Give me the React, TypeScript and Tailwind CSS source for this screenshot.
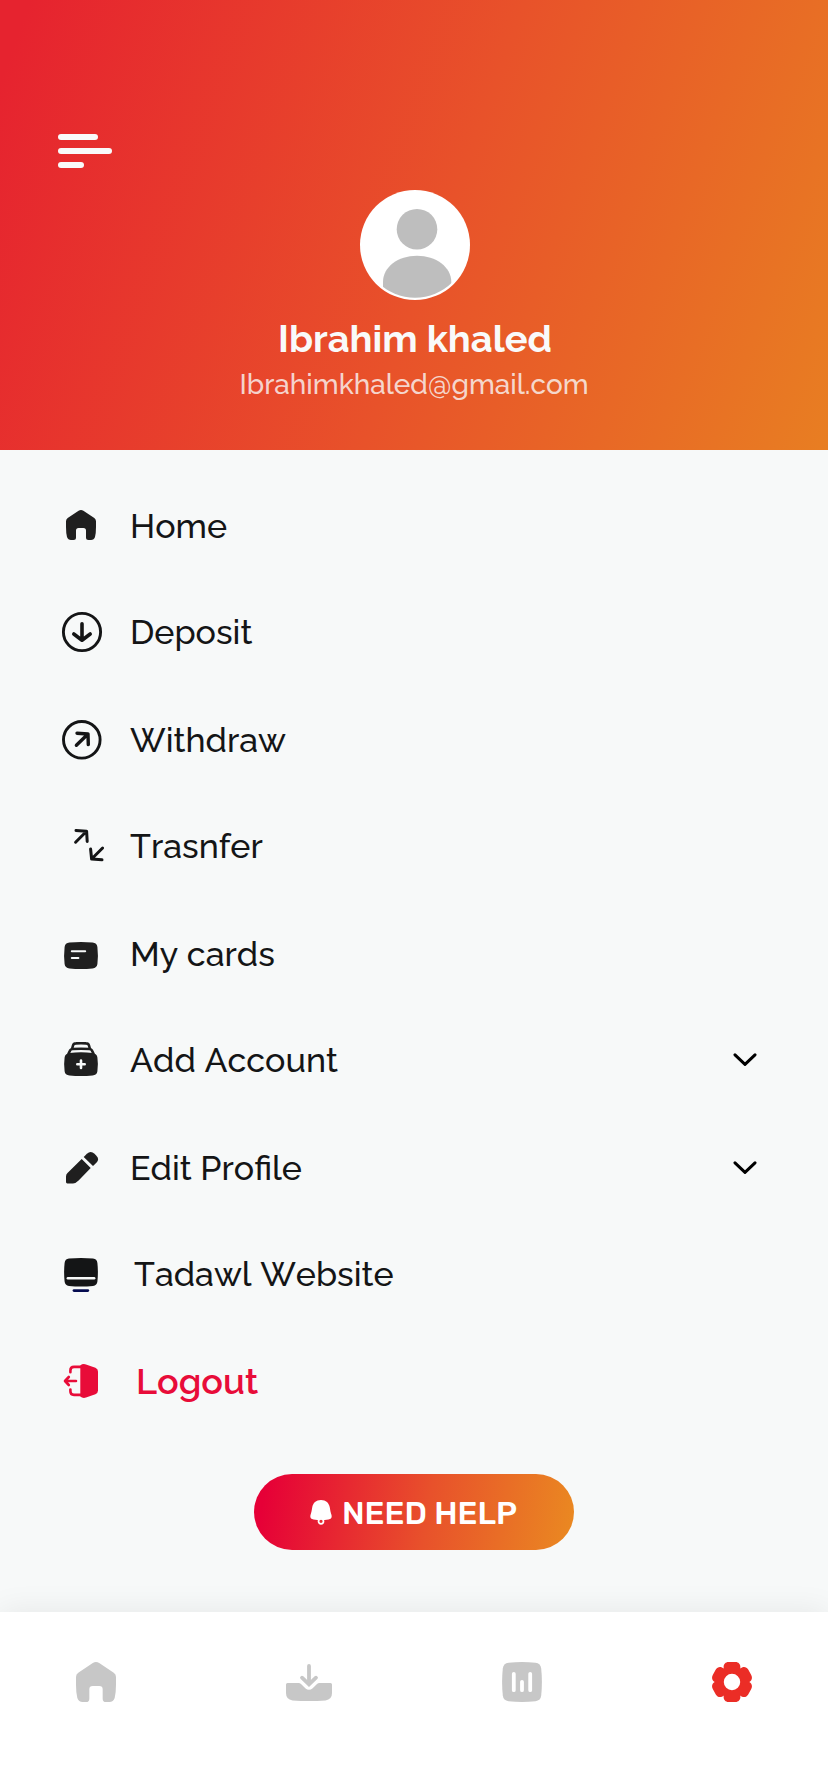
import React from 'react';

interface MenuItem {
  label: string;
  icon: React.ReactNode;
  textClass: string;
  expandable?: boolean;
}

const HOME_PATH =
  'M20.6 8.8Q23 7.2 25.4 8.8L36.3 16Q38 17.2 38 19.2V25Q38 31 37 35Q36 38 33 38H30.5Q28 38 28 35.5V28.5Q28 26 25.5 26H20.5Q18 26 18 28.5V35.5Q18 38 15.5 38H13Q10 38 9 35Q8 31 8 25V19.2Q8 17.2 9.7 16Z';

const IconBox: React.FC<{ children: React.ReactNode }> = ({ children }) => (
  <svg
    className="h-12 w-12 shrink-0"
    viewBox="0 0 48 48"
    fill="none"
    strokeLinecap="round"
    strokeLinejoin="round"
  >
    {children}
  </svg>
);

const HomeIcon = () => (
  <IconBox>
    <path d={HOME_PATH} fill="#1f1f1f" />
  </IconBox>
);

const DepositIcon = () => (
  <IconBox>
    <circle cx="24" cy="24" r="18.6" stroke="#141516" strokeWidth="2.9" />
    <path d="M24 15.8V32M15.8 26L24 32.2L32.2 26" stroke="#141516" strokeWidth="3.6" />
  </IconBox>
);

const WithdrawIcon = () => (
  <IconBox>
    <circle cx="23.8" cy="23.8" r="18.3" stroke="#141516" strokeWidth="2.9" />
    <path d="M18.4 29.2L30 18M19 17.2L30 18L30.3 28.6" stroke="#141516" strokeWidth="3.4" />
  </IconBox>
);

const TransferIcon = () => (
  <IconBox>
    <path
      d="M17.6 20.2L28.6 9.3M18 8.4L28.6 9.2L29.2 19.4M44.6 26L33.6 37M32.6 27L33.6 37L44 37.8"
      stroke="#141516"
      strokeWidth="3"
    />
  </IconBox>
);

const CardIcon = () => (
  <IconBox>
    <path
      d="M11.5 12.6Q23 11.4 34.5 12.6Q39 13 39.4 17Q40.4 25.5 39.4 34Q39 38 34.5 38.4Q23 39.6 11.5 38.4Q7 38 6.6 34Q5.6 25.5 6.6 17Q7 13 11.5 12.6Z"
      fill="#1f1f1f"
    />
    <path d="M13.8 21.3H27.2M13.8 28H20.4" stroke="#f7f9f9" strokeWidth="2" />
  </IconBox>
);

const AddAccountIcon = () => (
  <IconBox>
    <path d="M14.2 12.5L15 9.5Q15.6 7.5 18 7.4Q23 7 28 7.4Q30.4 7.5 31 9.5L31.8 12.5" stroke="#1f1f1f" strokeWidth="2.6" />
    <path d="M10.6 17.5L12 14.6Q12.6 13.2 14.6 13Q23 12.4 31.4 13Q33.4 13.2 34 14.6L35.4 17.5" stroke="#1f1f1f" strokeWidth="2.6" />
    <path
      d="M11.5 16.9Q23 15.8 34.5 16.9Q39 17.4 39.4 21.4Q40.4 28.3 39.4 35.2Q39 39 34.5 39.5Q23 40.6 11.5 39.5Q7 39 6.6 35.2Q5.6 28.3 6.6 21.4Q7 17.4 11.5 16.9Z"
      fill="#1f1f1f"
    />
    <path d="M23 24.6V32M19.3 28.3H26.7" stroke="#f7f9f9" strokeWidth="2.6" />
  </IconBox>
);

const EditIcon = () => (
  <IconBox>
    <path d="M23.7 15L32.7 24L20.6 36.6Q18 39.4 15 39.4H9.3Q8 39.4 8 38V32.5Q8 30.4 9.5 29Z" fill="#1f1f1f" />
    <path d="M25.7 13L28.9 9.8Q32.7 6.4 36.5 9.8L38.4 11.7Q41.8 15.3 38.4 18.8L35 22Z" fill="#1f1f1f" />
  </IconBox>
);

const WebsiteIcon = () => (
  <IconBox>
    <path
      d="M11 8.6Q23 7.4 35 8.6Q39 9 39.4 13Q40.4 22 39.4 31.5Q39 35.4 35 35.9Q23 37.1 11 35.9Q7 35.4 6.6 31.5Q5.6 22 6.6 13Q7 9 11 8.6Z"
      fill="#141516"
    />
    <path d="M9.8 28.3H36.2" stroke="#f7f9f9" strokeWidth="2.4" />
    <path d="M16 40.6H29.8" stroke="#050c50" strokeWidth="2.8" />
  </IconBox>
);

const LogoutIcon = () => (
  <IconBox>
    <path
      d="M22.3 7.5Q24.5 5.5 28 6.4L37.4 9.8Q40 10.9 40 13.5V32.5Q40 35.1 37.4 36.2L28 39.6Q24.5 40.5 22.3 38.5Z"
      fill="#e80c39"
    />
    <path
      d="M12.4 14.2V12.5Q12.4 8.9 16 8.9H23M12.4 31.6V33.3Q12.4 36.9 16 36.9H23"
      stroke="#e80c39"
      strokeWidth="2.6"
    />
    <path d="M18 23H7.2M10.8 19L7 23L10.8 27" stroke="#e80c39" strokeWidth="2.6" />
  </IconBox>
);

const ChevronIcon = () => (
  <svg className="h-6 w-6" viewBox="0 0 24 24" fill="none">
    <path
      d="M2 6.8L12 16.4L22 6.8"
      stroke="#000000"
      strokeWidth="3"
      strokeLinecap="round"
      strokeLinejoin="round"
    />
  </svg>
);

const BellIcon = () => (
  <svg className="h-[25px] w-[22px]" viewBox="0 0 22 25">
    <path
      d="M11 0C16 0 19 3 19.8 7.4C20.2 10 20.6 12 21.5 15C22.1 17.6 21.3 19 18.5 19.4Q11 20.6 3.5 19.4C.7 19 -.1 17.6 .5 15C1.4 12 1.8 10 2.2 7.4C3 3 6 0 11 0Z"
      fill="#ffffff"
    />
    <circle cx="11" cy="21.3" r="2.5" fill="#e72a33" stroke="#ffffff" strokeWidth="1.7" />
  </svg>
);

const menuItems: MenuItem[] = [
  { label: 'Home', icon: <HomeIcon />, textClass: 'ml-6' },
  { label: 'Deposit', icon: <DepositIcon />, textClass: 'ml-6' },
  { label: 'Withdraw', icon: <WithdrawIcon />, textClass: 'ml-6' },
  { label: 'Trasnfer', icon: <TransferIcon />, textClass: 'ml-6' },
  { label: 'My cards', icon: <CardIcon />, textClass: 'ml-6' },
  { label: 'Add Account', icon: <AddAccountIcon />, textClass: 'ml-6', expandable: true },
  { label: 'Edit Profile', icon: <EditIcon />, textClass: 'ml-6', expandable: true },
  { label: 'Tadawl Website', icon: <WebsiteIcon />, textClass: 'ml-7' },
  { label: 'Logout', icon: <LogoutIcon />, textClass: 'ml-[30px] pb-0.5 text-[36px] font-semibold text-[#e80c39]' },
];

const Header: React.FC = () => (
  <header className="flex h-[450px] flex-col items-center bg-[linear-gradient(110deg,#e6232f_3%,#e8522a_53%,#e87e22_100%)] pt-[134px]">
    <button className="flex flex-col gap-2 self-start pl-[58px]" aria-label="Menu">
      <span className="h-1.5 w-10 rounded-full bg-[#f9fafa]" />
      <span className="h-1.5 w-[54px] rounded-full bg-[#f9fafa]" />
      <span className="h-1.5 w-[26px] rounded-full bg-[#f9fafa]" />
    </button>

    <svg className="mt-[22px] ml-0.5 h-[110px] w-[110px] shrink-0" viewBox="0 0 110 110">
      <clipPath id="avatar">
        <circle cx="55" cy="55" r="52.8" />
      </clipPath>
      <circle cx="55" cy="55" r="55" fill="#ffffff" />
      <circle cx="57" cy="39.2" r="20.3" fill="#bebebe" />
      <path d="M23 110V92C23 77 38 65.7 57 65.7S91.3 77 91.3 92V110Z" fill="#bebebe" clipPath="url(#avatar)" />
    </svg>

    <h1 className="mt-[17px] ml-0.5 text-[38px] leading-[44px] font-bold whitespace-nowrap text-[#f9fafa]">
      Ibrahim khaled
    </h1>
    <p className="mt-1.5 text-[28px] leading-9 font-medium whitespace-nowrap text-[#f9fafa]/80">
      Ibrahimkhaled@gmail.com
    </p>
  </header>
);

const BottomNav: React.FC = () => (
  <nav className="flex h-[180px] items-start justify-between bg-white px-[76px] pt-[50px] shadow-[0_0_30px_rgba(0,0,0,0.08)]">
    <svg className="h-10 w-10" viewBox="8 8 30 30">
      <path d={HOME_PATH} fill="#c7c7c7" />
    </svg>
    <svg className="h-10 w-[46px]" viewBox="0 0 46 40" fill="none">
      <path
        d="M1.5 21H12.5Q14 21 15 22L19.3 26.2Q23 29.4 26.7 26.2L31 22Q32 21 33.5 21H44.5Q46 21 46 22.5V31Q46 37.5 39.5 38.4Q23 39.8 6.5 38.4Q0 37.5 0 31V22.5Q0 21 1.5 21Z"
        fill="#c7c7c7"
      />
      <path d="M23 4V22M16 15.7L23 22.4L30 15.7" stroke="#c7c7c7" strokeWidth="3.8" strokeLinecap="round" />
    </svg>
    <svg className="h-10 w-10" viewBox="0 0 40 40" fill="none">
      <path
        d="M6.5 .8Q20 -.6 33.5 .8Q38.6 1.4 39.2 6.5Q40.6 20 39.2 33.5Q38.6 38.6 33.5 39.2Q20 40.6 6.5 39.2Q1.4 38.6 .8 33.5Q-.6 20 .8 6.5Q1.4 1.4 6.5 .8Z"
        fill="#c7c7c7"
      />
      <path d="M11.8 11.8V28.2M20 19.8V28.2M28.2 11.8V28.2" stroke="#ffffff" strokeWidth="3.8" strokeLinecap="round" />
    </svg>
    <svg className="h-10 w-10" viewBox="0 0 40 40">
      <path
        fillRule="evenodd"
        d="M11.8 6.5C11 3 13 0 16.5 0H23.5C27 0 29 3 28.2 6.5C31 4 34.5 4.5 36.2 7.5L39.1 12.8C40.8 15.8 39.8 18.8 37.3 20C39.8 21.2 40.8 24.2 39.1 27.2L36.2 32.5C34.5 35.5 31 36 28.2 33.5C29 37 27 40 23.5 40H16.5C13 40 11 37 11.8 33.5C9 36 5.5 35.5 3.8 32.5L.9 27.2C-.8 24.2 .2 21.2 2.7 20C.2 18.8 -.8 15.8 .9 12.8L3.8 7.5C5.5 4.5 9 4 11.8 6.5ZM20 11.8A8.2 8.2 0 1 0 20 28.2A8.2 8.2 0 1 0 20 11.8Z"
        fill="#eb2d26"
      />
    </svg>
  </nav>
);

const App: React.FC = () => {
  return (
    <div className="flex h-[1792px] w-[828px] flex-col overflow-hidden bg-[#f7f9f9] font-['Raleway','Lato',sans-serif] [font-kerning:none]">
      <Header />

      <main className="flex flex-1 flex-col items-center pt-[46px]">
        <ul className="w-full pr-[71px] pl-[58px]">
          {menuItems.map((item) => (
            <li
              key={item.label}
              className="flex h-[60px] items-center text-[34px] leading-10 font-medium text-[#141516] odd:mb-[46px] even:mb-12"
            >
              {item.icon}
              <span className={`whitespace-nowrap ${item.textClass}`}>{item.label}</span>
              {item.expandable && (
                <span className="ml-auto">
                  <ChevronIcon />
                </span>
              )}
            </li>
          ))}
        </ul>

        <button className="mt-4 flex h-[76px] w-80 items-center rounded-full bg-[linear-gradient(100deg,#e60037_4%,#e8512b_54%,#ea8a21_100%)] pl-14">
          <BellIcon />
          <span className="ml-2.5 pt-0.5 font-['Rubik','Roboto',sans-serif] text-[32px] leading-9 font-medium whitespace-nowrap text-white">
            NEED HELP
          </span>
        </button>
      </main>

      <BottomNav />
    </div>
  );
};

export default App;
